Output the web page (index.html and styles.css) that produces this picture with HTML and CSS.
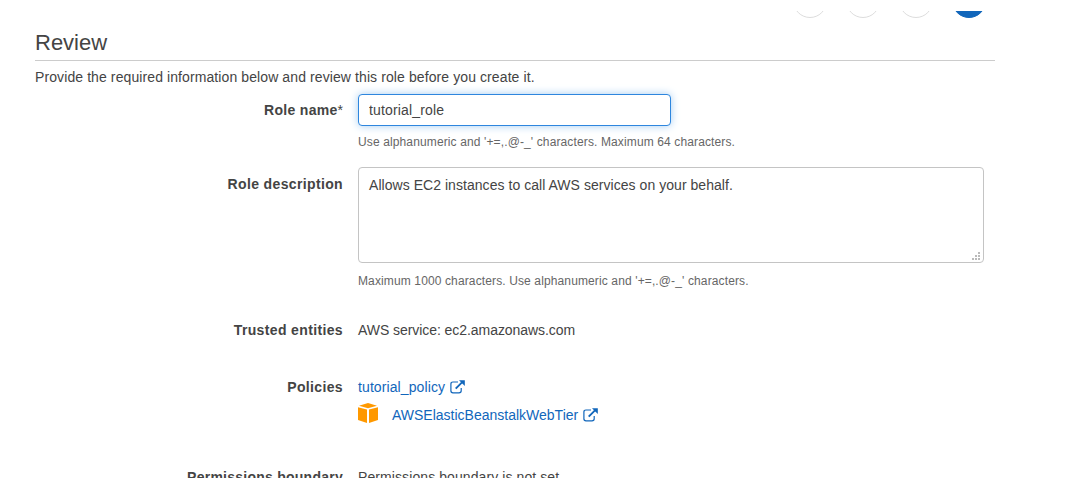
FILE: index.html
```html
<!DOCTYPE html>
<html lang="en">
<head>
<meta charset="utf-8">
<title>Review role</title>
<link rel="stylesheet" href="styles.css">
</head>
<body>
<svg class="sprite" width="0" height="0">
  <symbol id="external" viewBox="0 0 15 14">
    <path d="M8 2H3Q.9 2 .9 4V10.8Q.9 12.8 3 12.8H9Q11.2 12.8 11.2 10.8V8" fill="none" stroke="currentColor" stroke-width="1.2"/>
    <path d="M5.7 8.6L12 2.4" fill="none" stroke="currentColor" stroke-width="1.9"/>
    <path d="M9 .3H14.8V6Z" fill="currentColor"/>
  </symbol>
</svg>
<main class="page">
  <div class="steps">
    <span class="step"></span><span class="step"></span><span class="step"></span><span class="step step-active"></span>
  </div>
  <h1 class="title">Review</h1>
  <p class="intro">Provide the required information below and review this role before you create it.</p>
  <div class="form">
    <div class="row row-name">
      <label class="label" for="name">Role name<span class="required">*</span></label>
      <div class="field">
        <input class="input" id="name" value="tutorial_role">
        <p class="hint">Use alphanumeric and '+=,.@-_' characters. Maximum 64 characters.</p>
      </div>
    </div>
    <div class="row row-description">
      <label class="label" for="description">Role description</label>
      <div class="field">
        <div class="area-wrap">
          <textarea class="input area" id="description">Allows EC2 instances to call AWS services on your behalf.</textarea>
          <svg class="grip" viewBox="0 0 8 8"><path d="M6 0h2v2h-2z M3 3h2v2h-2z M6 3h2v2h-2z M0 6h2v2h-2z M3 6h2v2h-2z M6 6h2v2h-2z"/></svg>
        </div>
        <p class="hint">Maximum 1000 characters. Use alphanumeric and '+=,.@-_' characters.</p>
      </div>
    </div>
    <div class="row row-entities">
      <span class="label">Trusted entities</span>
      <div class="field">AWS service: ec2.amazonaws.com</div>
    </div>
    <div class="row row-policies">
      <span class="label">Policies</span>
      <div class="field">
        <a class="policy policy-custom">tutorial_policy <svg class="external"><use href="#external"/></svg></a>
        <a class="policy"><svg class="cube" viewBox="0 0 20 20"><path d="M10 0L19 2.7L10 5.2L1 2.7Z M0 4.2L9 6.6V20L0 17Z M20 4.2L11 6.6V20L20 17Z"/></svg>AWSElasticBeanstalkWebTier <svg class="external"><use href="#external"/></svg></a>
      </div>
    </div>
    <div class="row row-boundary">
      <span class="label">Permissions boundary</span>
      <div class="field">Permissions boundary is not set</div>
    </div>
  </div>
</main>
</body>
</html>
```
FILE: styles.css
```css
* { box-sizing: border-box; }
body { margin: 0; background: #fff; color: #444; font: 14px/20px "Liberation Sans", Arial, sans-serif; overflow: hidden; }
.sprite { display: block; }
.page { width: 1087px; height: 478px; padding: 11px 92px 0 35px; overflow: hidden; }
.steps { height: 8px; display: flex; align-items: flex-end; justify-content: flex-end; gap: 18.7px; padding-right: 9.5px; overflow: hidden; }
.step { flex: none; width: 34px; height: 34px; border: 1px solid #ddd; border-radius: 50%; margin-bottom: 1px; }
.step-active { background: #1166bb; border-color: #1166bb; }
.title { height: 42px; margin: 0; padding-top: 9px; border-bottom: 1px solid #ccc; font-size: 22px; line-height: 30px; font-weight: 400; }
.intro { margin: 6px 0 7px; letter-spacing: .097px; }
.row { display: grid; grid-template-columns: 308px 626px; column-gap: 15px; }
.row-name { height: 73px; }
.row-description { height: 153px; }
.row-entities { height: 57px; }
.row-entities .field { letter-spacing: -.06px; }
.row-policies { height: 90px; }
.row-boundary .field { letter-spacing: .09px; }
.label { text-align: right; font-weight: 700; letter-spacing: .36px; }
.row-name .label { padding-top: 6px; letter-spacing: .3px; }
.row-description .label { padding-top: 7px; }
.row-boundary .label { letter-spacing: .25px; }
.required { font-weight: 400; letter-spacing: 0; }
.input { display: block; width: 313px; height: 32px; padding: 5px 10px; border: 1px solid #2e86de; border-radius: 4px; outline: 0; box-shadow: 0 0 8px #a5cdf2; color: #444; font: inherit; letter-spacing: .15px; }
.area-wrap { position: relative; }
.area { width: 626px; height: 96px; padding: 7px 10px; border-color: #c4c4c4; box-shadow: none; letter-spacing: .045px; resize: none; }
.grip { position: absolute; right: 4px; bottom: 3px; width: 8px; height: 8px; fill: #bbb; pointer-events: none; }
.hint { margin: 8px 0 0; color: #666; font-size: 12px; line-height: 16px; letter-spacing: .125px; }
.area-wrap + .hint { margin-top: 10px; }
.policy { display: flex; align-items: center; height: 20px; margin-bottom: 8px; color: #1166bb; }
.policy-custom { letter-spacing: .1px; }
.external { width: 15px; height: 14px; margin-left: 5px; }
.cube { width: 20px; height: 20px; margin: -4px 14px 0 0; fill: #f90; }
```
